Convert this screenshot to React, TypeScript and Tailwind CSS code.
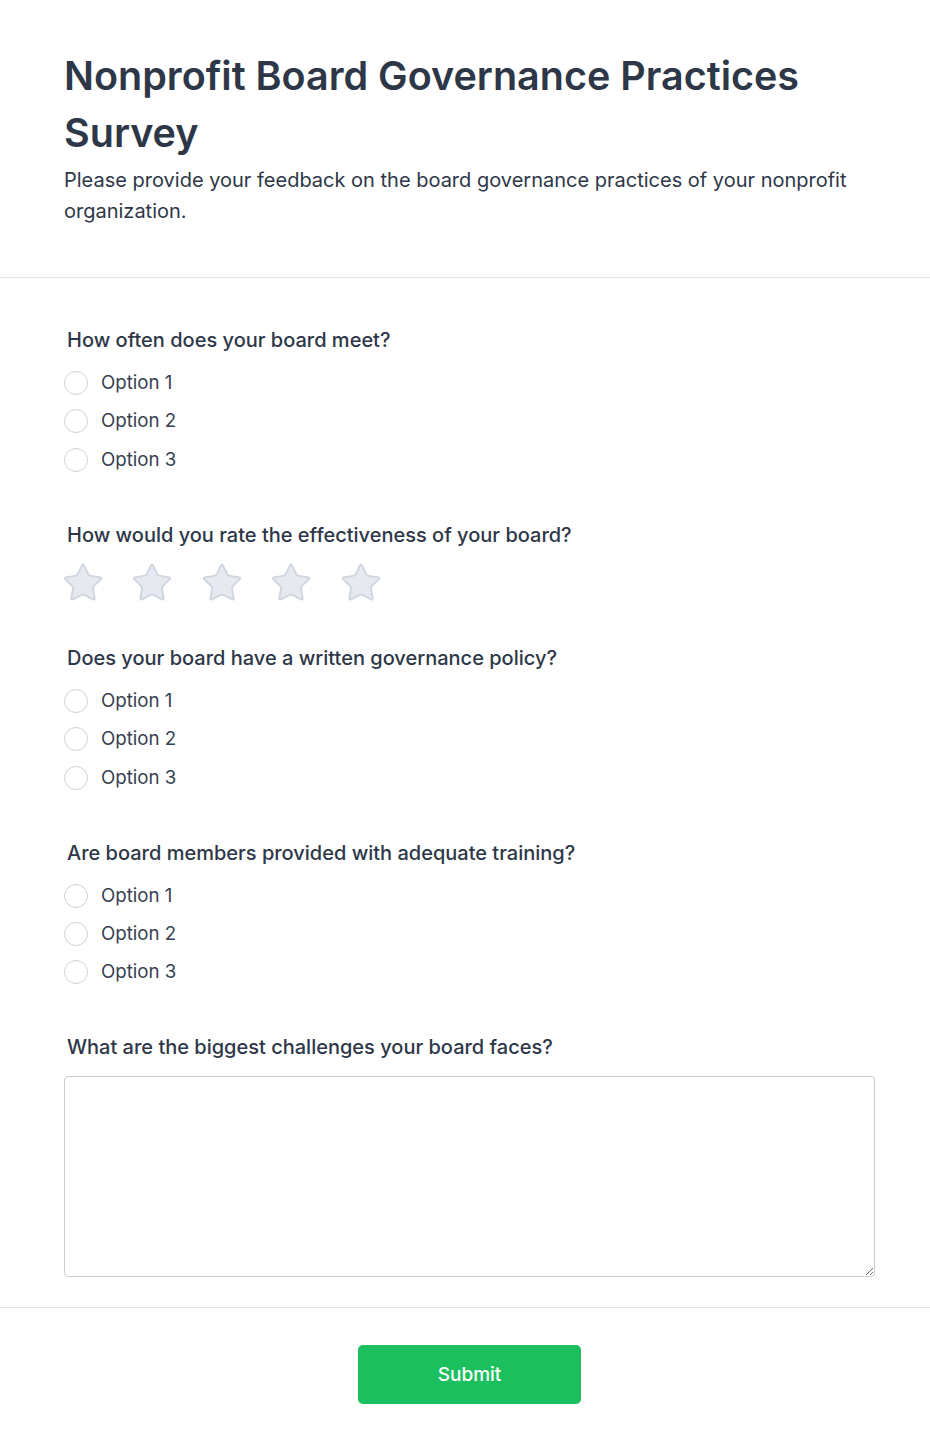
import React from "react";

const StarIcon = () => (
  <svg width="44" height="44" viewBox="0 0 24 24" fill="#e6e9f0" stroke="#cfd5df" strokeWidth="1" strokeLinejoin="round">
    <path d="M11.525 2.295a.53.53 0 0 1 .95 0l2.31 4.679a2.123 2.123 0 0 0 1.595 1.16l5.166.756a.53.53 0 0 1 .294.904l-3.736 3.638a2.123 2.123 0 0 0-.611 1.878l.882 5.14a.53.53 0 0 1-.771.56l-4.618-2.428a2.122 2.122 0 0 0-1.973 0L6.396 21.01a.53.53 0 0 1-.77-.56l.881-5.139a2.122 2.122 0 0 0-.611-1.879L2.16 9.795a.53.53 0 0 1 .294-.906l5.165-.755a2.122 2.122 0 0 0 1.597-1.16z" />
  </svg>
);

const Label = ({ children }: { children: React.ReactNode }) => (
  <div className="pl-[3px] text-[20px] leading-[28px] font-medium text-[#2d3748]">{children}</div>
);

const RadioGroup = ({ name }: { name: string }) => (
  <div className="flex flex-col gap-[14.4px] mt-[17px]">
    {["Option 1", "Option 2", "Option 3"].map((o) => (
      <label key={o} className="flex items-center h-[24px]">
        <span className="w-[24px] h-[24px] rounded-full border-[1.5px] border-[#cbd2dc] bg-white shrink-0" />
        <input type="radio" name={name} className="hidden" />
        <span className="ml-[13px] text-[18.7px] leading-[24px] text-[#374151]">{o}</span>
      </label>
    ))}
  </div>
);

export default function App() {
  return (
    <div className="bg-white min-h-[1454px]" style={{ fontFamily: "Inter, 'Noto Sans', sans-serif" }}>
      <div className="pt-12 pb-[51px] pl-16 pr-[55px] border-b border-[#e2e6ec]">
        <h1 className="text-[39.5px] leading-[57px] font-semibold text-[#2d3748]">
          Nonprofit Board Governance Practices Survey
        </h1>
        <p className="mt-[3px] text-[20px] leading-[30.5px] text-[#2d3748]">
          Please provide your feedback on the board governance practices of your nonprofit organization.
        </p>
      </div>

      <div className="pt-12 pb-[30px] pl-16 pr-[55px] border-b border-[#e2e6ec]">
        <div className="mb-[49px]">
          <Label>How often does your board meet?</Label>
          <RadioGroup name="q1" />
        </div>
        <div className="mb-[39px]">
          <Label>How would you rate the effectiveness of your board?</Label>
          <div className="flex gap-[25.4px] mt-[12px] ml-[-3px]">
            {[0, 1, 2, 3, 4].map((i) => (
              <StarIcon key={i} />
            ))}
          </div>
        </div>
        <div className="mb-[49px]">
          <Label>Does your board have a written governance policy?</Label>
          <RadioGroup name="q3" />
        </div>
        <div className="mb-[49px]">
          <Label>Are board members provided with adequate training?</Label>
          <RadioGroup name="q4" />
        </div>
        <div>
          <Label>What are the biggest challenges your board faces?</Label>
          <textarea className="block mt-[15px] w-full h-[201px] border border-[#c9ced8] rounded-[4px] bg-white" />
        </div>
      </div>

      <div className="pt-[37px] pl-16 pr-[55px] flex justify-center">
        <button className="w-[223px] h-[59px] rounded-[5px] bg-[#1bbf5d] text-white text-[19px] font-medium">
          Submit
        </button>
      </div>
    </div>
  );
}
